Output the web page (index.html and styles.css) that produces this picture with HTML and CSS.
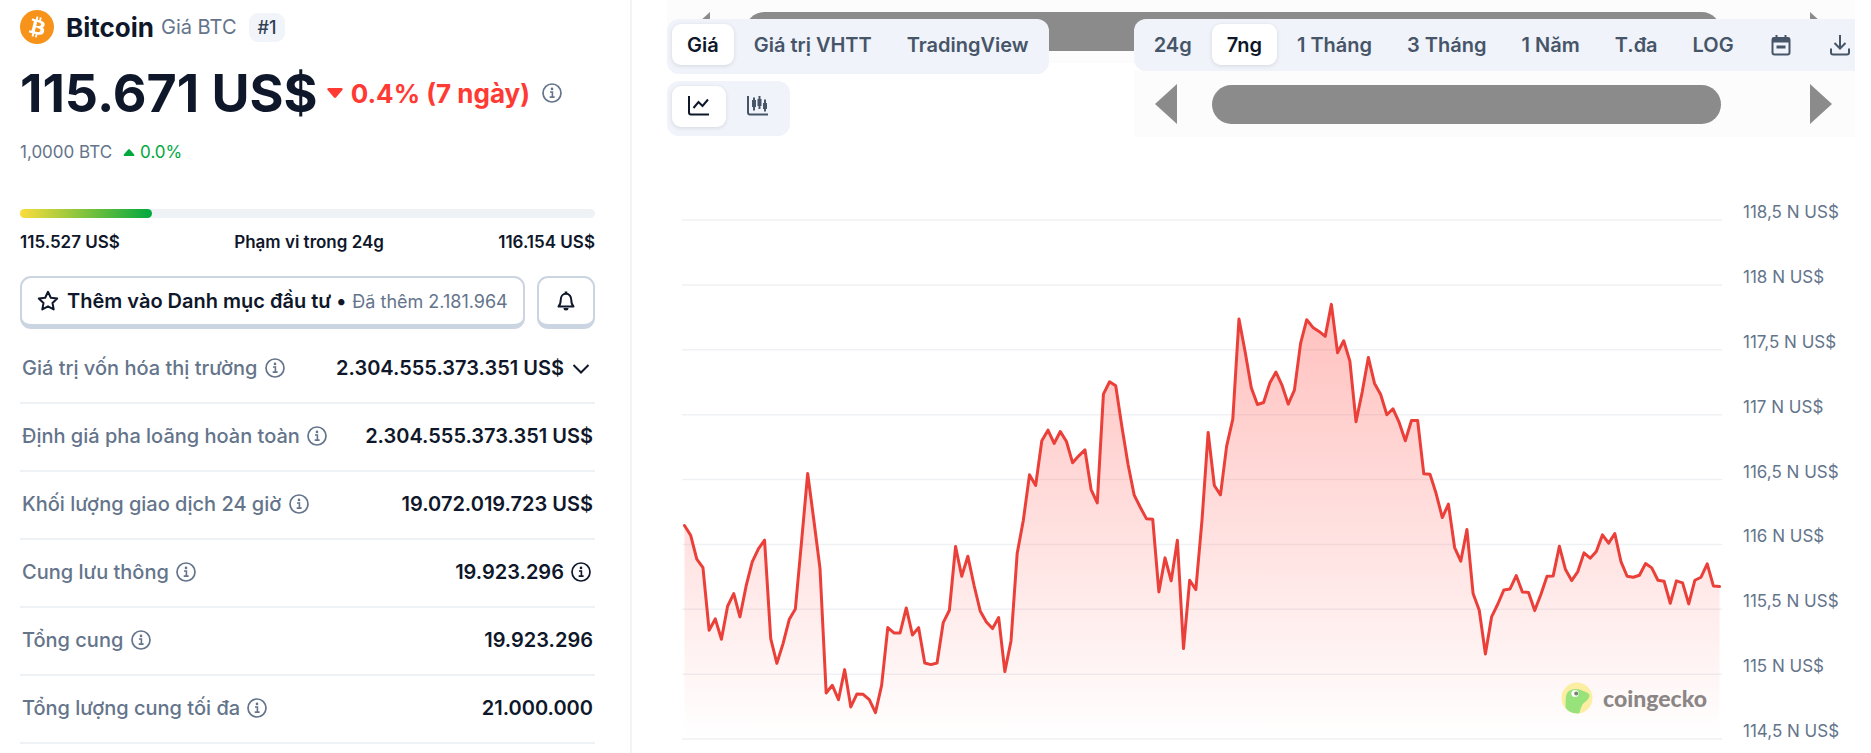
FILE: index.html
```html
<!DOCTYPE html>
<html lang="vi">
<head>
    <meta charset="UTF-8">
    <meta name="viewport" content="width=device-width, initial-scale=1.0">
    <title>Giá Bitcoin (BTC)</title>
    <link rel="stylesheet" href="styles.css">
</head>
<body>

    <svg class="sprite" aria-hidden="true">
        <symbol id="icon-info" viewBox="0 0 20 20">
            <circle cx="10" cy="10" r="9" fill="none" stroke="currentColor" stroke-width="1.7"/>
            <circle cx="10" cy="5.9" r="1.3" fill="currentColor"/>
            <path d="M8 9h2.4v4.8M7.7 14.1h4.9" fill="none" stroke="currentColor" stroke-width="1.6"/>
        </symbol>
    </svg>

    <div class="page">

        <aside class="coin">
            <div class="coin-head">
                <svg class="coin-logo" viewBox="0 0 32 32" aria-hidden="true">
                    <circle cx="16" cy="16" r="16" fill="#f7931a"/>
                    <path fill="#fff" d="M23.189 14.02c.314-2.096-1.283-3.223-3.465-3.975l.708-2.84-1.728-.43-.69 2.765c-.454-.114-.92-.22-1.385-.326l.695-2.783L15.596 6l-.708 2.839c-.376-.086-.746-.17-1.104-.26l.002-.009-2.384-.595-.46 1.846s1.283.294 1.256.312c.7.175.826.638.805 1.006l-.806 3.235c.048.012.11.03.18.057l-.183-.045-1.13 4.532c-.086.212-.303.531-.793.41.018.025-1.256-.313-1.256-.313l-.858 1.978 2.25.561c.418.105.828.215 1.231.318l-.715 2.872 1.727.43.708-2.84c.472.127.93.245 1.378.357l-.706 2.828 1.728.43.715-2.866c2.948.558 5.164.333 6.097-2.333.752-2.146-.037-3.385-1.588-4.192 1.13-.26 1.98-1.003 2.207-2.538zm-3.95 5.538c-.533 2.147-4.148.986-5.32.695l.95-3.805c1.172.293 4.929.872 4.37 3.11zm.535-5.569c-.487 1.953-3.495.96-4.47.717l.86-3.45c.975.243 4.118.696 3.61 2.733z"/>
                </svg>
                <h1>Bitcoin</h1>
                <span class="coin-symbol">Giá BTC</span>
                <span class="rank">#1</span>
            </div>

            <div class="price-row">
                <span class="price">115.671 US$</span>
                <span class="change down">
                    <svg class="caret" viewBox="0 0 16 10" aria-hidden="true"><path d="M1.500 0h13a1.200 1.200 0 0 1 .9 2L9.200 9.300a1.600 1.600 0 0 1-2.400 0L.6 2a1.200 1.200 0 0 1 .9-2z"/></svg>
                    0.4% (7 ngày)
                </span>
                <svg class="info"><use href="#icon-info"/></svg>
            </div>

            <div class="btc-row">
                <span>1,0000 BTC</span>
                <span class="change-small up">
                    <svg class="caret-small" viewBox="0 0 16 10" aria-hidden="true"><path d="M1.500 10h13a1.200 1.200 0 0 0 .9-2L9.200.7a1.600 1.600 0 0 0-2.400 0L.6 8a1.200 1.200 0 0 0 .9 2z"/></svg>
                    0.0%
                </span>
            </div>

            <div class="range"><div class="range-fill" style="width: 23%"></div></div>
            <div class="range-labels">
                <span>115.527 US$</span>
                <span>Phạm vi trong 24g</span>
                <span>116.154 US$</span>
            </div>

            <div class="actions">
                <button class="btn btn-portfolio" type="button">
                    <svg class="icon-star" viewBox="0 0 22 22" aria-hidden="true"><path d="M11 1.800l2.800 5.900 6.400.8-4.700 4.500 1.200 6.400L11 16.300l-5.700 3.100 1.200-6.400L1.800 8.500l6.400-.8z"/></svg>
                    <span>Thêm vào Danh mục đầu tư •</span>
                    <span class="added">Đã thêm 2.181.964</span>
                </button>
                <button class="btn btn-alert" type="button" aria-label="Cảnh báo giá">
                    <svg class="icon-bell" viewBox="0 0 22 22" aria-hidden="true"><path d="M3.500 16.500h15c-1.600-1.500-2.200-3-2.200-6.500 0-3.600-2-6.200-5.300-6.200S5.700 6.400 5.700 10c0 3.500-.6 5-2.200 6.500z"/><path class="solid" d="M9.700 1.500h2.600v2.300H9.700zM8.500 18h5a2.500 2.500 0 0 1-5 0z"/></svg>
                </button>
            </div>

            <table class="stats">
                <tr>
                    <th scope="row">Giá trị vốn hóa thị trường <svg class="info"><use href="#icon-info"/></svg></th>
                    <td>2.304.555.373.351 US$ <svg class="chevron" viewBox="0 0 20 20" aria-hidden="true"><path d="M2.500 6l7.500 7.500L17.500 6"/></svg></td>
                </tr>
                <tr>
                    <th scope="row">Định giá pha loãng hoàn toàn <svg class="info"><use href="#icon-info"/></svg></th>
                    <td>2.304.555.373.351 US$</td>
                </tr>
                <tr>
                    <th scope="row">Khối lượng giao dịch 24 giờ <svg class="info"><use href="#icon-info"/></svg></th>
                    <td>19.072.019.723 US$</td>
                </tr>
                <tr>
                    <th scope="row">Cung lưu thông <svg class="info"><use href="#icon-info"/></svg></th>
                    <td>19.923.296 <svg class="info"><use href="#icon-info"/></svg></td>
                </tr>
                <tr>
                    <th scope="row">Tổng cung <svg class="info"><use href="#icon-info"/></svg></th>
                    <td>19.923.296</td>
                </tr>
                <tr>
                    <th scope="row">Tổng lượng cung tối đa <svg class="info"><use href="#icon-info"/></svg></th>
                    <td>21.000.000</td>
                </tr>
            </table>
        </aside>

        <main class="chart-panel">
            <div class="scrollbar scrollbar-top" aria-hidden="true">
                <span class="arrow arrow-left"></span>
                <span class="thumb"></span>
                <span class="arrow arrow-right"></span>
            </div>

            <div class="tools">
                <div class="tools-left">
                    <div class="tabs">
                        <button class="tab active" type="button">Giá</button>
                        <button class="tab" type="button">Giá trị VHTT</button>
                        <button class="tab" type="button">TradingView</button>
                    </div>
                    <div class="tabs">
                        <button class="tab active" type="button" aria-label="Biểu đồ đường">
                            <svg class="tab-icon" viewBox="0 0 24 24" aria-hidden="true"><path d="M2 1v16.500a2 2 0 0 0 2 2H22M6.500 13l5-6 4 4L21 4.500"/></svg>
                        </button>
                        <button class="tab" type="button" aria-label="Biểu đồ nến">
                            <svg class="tab-icon" viewBox="0 0 24 24" aria-hidden="true"><path d="M2 1v16.500a2 2 0 0 0 2 2H22M8 2.500v13M13.500 1v13M19 4.500v12"/><path class="candle" d="M8 5v7M13.500 4v7M19 8v6"/></svg>
                        </button>
                    </div>
                </div>

                <div class="tools-right">
                    <div class="tabs tabs-range">
                        <button class="tab" type="button">24g</button>
                        <button class="tab active" type="button">7ng</button>
                        <button class="tab" type="button">1 Tháng</button>
                        <button class="tab" type="button">3 Tháng</button>
                        <button class="tab" type="button">1 Năm</button>
                        <button class="tab" type="button">T.đa</button>
                        <button class="tab" type="button">LOG</button>
                        <button class="tab" type="button" aria-label="Chọn ngày">
                            <svg class="tab-icon" viewBox="0 0 24 24" aria-hidden="true"><rect x="3.500" y="5" width="17" height="16.500" rx="2"/><path d="M7.500 2v4M16.500 2v4"/><path class="block" d="M3.500 4.500h17v5h-17zM7.500 12.500h9v3h-9z"/></svg>
                        </button>
                        <button class="tab" type="button" aria-label="Tải xuống">
                            <svg class="tab-icon" viewBox="0 0 24 24" aria-hidden="true"><path d="M12 2v13M6.500 10l5.500 5.500 5.500-5.500M3 15.500v4a2 2 0 0 0 2 2h14a2 2 0 0 0 2-2v-4"/></svg>
                        </button>
                    </div>
                    <div class="scrollbar" aria-hidden="true">
                        <span class="arrow arrow-left"></span>
                        <span class="thumb"></span>
                        <span class="arrow arrow-right"></span>
                    </div>
                </div>
            </div>

            <div class="chart">
                <div class="plot">
                    <svg class="plot-svg" viewBox="-0.4 0 168.8 1556" preserveAspectRatio="none" role="img" aria-label="Giá Bitcoin trong 7 ngày">
                        <defs>
                            <linearGradient id="fade" x1="0" y1="0" x2="0" y2="1">
                                <stop offset="0" stop-color="#ff3a33" stop-opacity=".32"/>
                                <stop offset="1" stop-color="#ff3a33" stop-opacity="0"/>
                            </linearGradient>
                        </defs>
                        <path id="grid" class="grid"/>
                        <path id="area" fill="url(#fade)"/>
                        <path id="line" class="line"/>
                    </svg>
                    <div class="watermark">
                        <svg class="gecko" viewBox="0 0 32 32" aria-hidden="true">
                            <circle cx="16" cy="16" r="15.500" fill="#fbeea3"/>
                            <path fill="#98e27b" d="M4.500 25.500C5 20 3.800 15 6.500 10.500 9 7 15 6 20 8c3 1.500 6 2 8 4 1.500 2-1 6-4 8s-4.500 6-5.500 11.300C12 32 7 29.500 4.500 25.500z"/>
                            <circle cx="14" cy="11.500" r="3.600" fill="#fff"/>
                            <circle cx="15.200" cy="11.500" r="2" fill="#76836f"/>
                        </svg>
                        <span>coingecko</span>
                    </div>
                </div>
                <div class="axis">
                    <span>118,5 N US$</span>
                    <span>118 N US$</span>
                    <span>117,5 N US$</span>
                    <span>117 N US$</span>
                    <span>116,5 N US$</span>
                    <span>116 N US$</span>
                    <span>115,5 N US$</span>
                    <span>115 N US$</span>
                    <span>114,5 N US$</span>
                </div>
            </div>
        </main>
    </div>

    <script>
        // một điểm mỗi giờ, 0 = 118,5 N và 1556 = 114,5 N
        const points = [
            916, 945, 1017, 1042, 1230, 1196, 1257, 1158, 1120, 1190, 1098, 1025,
            986, 960, 1255, 1329, 1270, 1198, 1166, 965, 760, 900, 1045, 1418,
            1395, 1438, 1348, 1460, 1421, 1422, 1438, 1477, 1395, 1222, 1238, 1238,
            1163, 1244, 1222, 1328, 1333, 1328, 1207, 1170, 979, 1068, 1008, 1095,
            1172, 1205, 1225, 1192, 1354, 1262, 1000, 900, 764, 796, 662, 630,
            670, 634, 664, 728, 707, 689, 808, 848, 522, 485, 497, 620,
            733, 825, 862, 896, 897, 1115, 1013, 1082, 960, 1285, 1080, 1108,
            900, 637, 796, 824, 678, 597, 297, 395, 503, 553, 547, 489,
            456, 496, 552, 510, 370, 299, 322, 334, 349, 253, 398, 362,
            423, 605, 516, 412, 490, 523, 584, 566, 607, 662, 601, 601,
            761, 762, 820, 892, 852, 982, 1023, 928, 1120, 1170, 1301, 1190,
            1152, 1109, 1106, 1066, 1115, 1117, 1171, 1123, 1068, 1067, 978, 1048,
            1081, 1054, 998, 1014, 994, 944, 969, 940, 1024, 1068, 1071, 1065,
            1030, 1043, 1080, 1083, 1149, 1082, 1088, 1151, 1080, 1071, 1031, 1097,
            1099
        ];
        const bottom = 1556;
        const path = 'M' + points.map((y, x) => x + ' ' + y).join('L');

        document.getElementById('line').setAttribute('d', path);
        document.getElementById('area').setAttribute('d', path + 'V' + bottom + 'H0Z');

        let grid = '';
        for (let i = 0; i <= 8; i++) {
            grid += 'M-0.4 ' + (bottom / 8 * i) + 'H168.4';
        }
        document.getElementById('grid').setAttribute('d', grid);
    </script>

</body>
</html>
```

FILE: styles.css
```css
* {
    box-sizing: border-box;
}
body {
    margin: 0;
    font-family: Inter, "Noto Sans", sans-serif;
    font-size: 20px;
    color: #0f172a;
    background-color: #fff;
}
button {
    font: inherit;
    color: inherit;
    border: none;
    cursor: pointer;
}
.sprite {
    display: none;
}
.page {
    display: flex;
    min-height: 100vh;
    overflow: hidden;
}

/* Cột thông tin bên trái */
.coin {
    flex: 0 0 632px;
    padding: 7px 35px 0 20px;
    border-right: 2px solid #f1f3f6;
}
.coin-head {
    display: flex;
    align-items: center;
    height: 40px;
}
.coin-logo {
    width: 34px;
    height: 34px;
    margin-right: 12px;
}
h1 {
    margin: 0 7px 0 0;
    font-size: 26px;
    font-weight: 700;
}
.coin-symbol {
    color: #64748b;
}
.rank {
    margin-left: 12px;
    padding: 0 9px;
    font-size: 18px;
    font-weight: 500;
    line-height: 29px;
    color: #334155;
    background-color: #f1f5f9;
    border-radius: 9px;
}
.price-row {
    display: flex;
    align-items: center;
    height: 64px;
    margin-top: 14px;
    white-space: nowrap;
}
.price {
    font-size: 52px;
    font-weight: 700;
}
.change {
    display: flex;
    align-items: center;
    gap: 8px;
    margin: 0 12px 0 9px;
    font-size: 26px;
    font-weight: 700;
}
.down {
    color: #ff3a33;
}
.up {
    color: #00a83e;
}
.caret {
    width: 16px;
    height: 10px;
    fill: currentColor;
}
.info {
    width: 20px;
    height: 20px;
    color: #64748b;
}
.btc-row {
    display: flex;
    gap: 11px;
    margin-top: 14px;
    font-size: 17px;
    line-height: 26px;
    color: #64748b;
}
.change-small {
    display: flex;
    align-items: center;
    gap: 5px;
}
.change-small.up {
    color: #00a83e;
}
.caret-small {
    width: 12px;
    height: 7px;
    fill: currentColor;
}
.range {
    height: 9px;
    margin-top: 44px;
    background-color: #eff2f5;
    border-radius: 5px;
}
.range-fill {
    height: 100%;
    border-radius: 5px;
    background: linear-gradient(to right, #fbdd3c, #00a83e);
}
.range-labels {
    display: flex;
    justify-content: space-between;
    margin-top: 12px;
    font-size: 17px;
    font-weight: 600;
    line-height: 24px;
}
.actions {
    display: flex;
    gap: 12px;
    margin-top: 22px;
}
.btn {
    display: flex;
    align-items: center;
    justify-content: center;
    height: 53px;
    padding: 0 15px;
    background-color: #fff;
    border: 2px solid #cbd5e1;
    border-bottom-width: 5px;
    border-radius: 11px;
    white-space: nowrap;
}
.btn-portfolio {
    flex: 1;
    justify-content: flex-start;
    font-weight: 600;
}
.added {
    margin-left: 6px;
    font-size: 18px;
    font-weight: 400;
    color: #64748b;
}
.btn-alert {
    width: 58px;
}
.icon-star,
.icon-bell {
    flex: none;
    width: 22px;
    height: 22px;
    fill: none;
    stroke: currentColor;
    stroke-width: 2;
    stroke-linejoin: round;
}
.icon-star {
    margin-right: 8px;
}
.icon-bell .solid {
    fill: currentColor;
    stroke: none;
}
.stats {
    width: 100%;
    margin-top: 6px;
    border-collapse: collapse;
    white-space: nowrap;
}
.stats tr {
    height: 68px;
    border-bottom: 2px solid #eff2f5;
}
.stats th {
    padding: 0 0 2px 2px;
    font-weight: 500;
    text-align: left;
    color: #64748b;
}
.stats td {
    padding: 0 2px 2px 0;
    font-weight: 600;
    text-align: right;
}
.stats .info {
    margin: 0 2px;
    vertical-align: -3px;
}
.stats td .info {
    color: #0f172a;
}
.chevron {
    width: 20px;
    height: 20px;
    margin: 0 2px;
    vertical-align: -4px;
    fill: none;
    stroke: currentColor;
    stroke-width: 2;
}

/* Biểu đồ */
.chart-panel {
    position: relative;
    flex: 1;
    min-width: 0;
    padding: 19px 16px 0 35px;
}
.scrollbar {
    display: flex;
    align-items: center;
    height: 66px;
    padding: 0 23px 0 21px;
    background-color: #fcfcfc;
}
.scrollbar-top {
    position: absolute;
    top: 0;
    left: 35px;
    right: 16px;
    height: 63px;
}
.arrow {
    border: 20px solid transparent;
}
.arrow-left {
    border-left-width: 0;
    border-right: 22px solid #8b8b8b;
}
.arrow-right {
    border-right-width: 0;
    border-left: 22px solid #8b8b8b;
}
.thumb {
    flex: 1;
    height: 39px;
    margin: 0 89px 0 35px;
    background-color: #8b8b8b;
    border-radius: 20px;
}
.tools {
    position: relative;
    display: flex;
    gap: 85px;
}
.tools-left {
    display: flex;
    flex-direction: column;
    align-items: flex-start;
    gap: 7px;
}
.tools-right {
    flex: 1;
    min-width: 0;
    overflow: hidden;
}
.tabs {
    display: flex;
    gap: 5px;
    padding: 5px 5px 9px;
    background-color: #f0f3f9;
    border-radius: 12px;
}
.tabs-range {
    width: max-content;
    padding-bottom: 6px;
}
.tab {
    flex: none;
    height: 41px;
    padding: 0 15px;
    font-weight: 600;
    color: #475569;
    background-color: transparent;
    border-radius: 9px;
    white-space: nowrap;
}
.tab.active {
    color: #0f172a;
    background-color: #fff;
    box-shadow: 0 1px 4px rgba(15, 23, 42, 0.12);
}
.tab-icon {
    display: block;
    width: 24px;
    height: 24px;
    fill: none;
    stroke: currentColor;
    stroke-width: 2;
}
.tab-icon .candle {
    stroke-width: 4;
}
.tab-icon .block {
    fill: currentColor;
    stroke: none;
}
.chart {
    display: flex;
    gap: 21px;
    margin-top: 67px;
    padding-left: 15px;
}
.plot {
    position: relative;
    flex: 1;
    min-width: 0;
    padding-top: 16px;
}
.plot-svg {
    display: block;
    width: 100%;
    height: 519px;
    overflow: visible;
}
.grid,
.line {
    fill: none;
    vector-effect: non-scaling-stroke;
}
.grid {
    stroke: #eff1f4;
    stroke-width: 1.5;
}
.line {
    stroke: #ea4039;
    stroke-width: 3;
    stroke-linejoin: round;
    stroke-linecap: round;
}
.watermark {
    position: absolute;
    right: 15px;
    bottom: 25px;
    display: flex;
    align-items: center;
    gap: 10px;
    font-family: Lato, sans-serif;
    font-size: 23px;
    font-weight: 900;
    line-height: 32px;
    color: #8b8685;
}
.gecko {
    width: 32px;
    height: 32px;
}
.axis {
    display: flex;
    flex-direction: column;
    justify-content: space-between;
    flex: 0 0 112px;
    font-size: 17px;
    line-height: 16px;
    color: #64748b;
}
```
